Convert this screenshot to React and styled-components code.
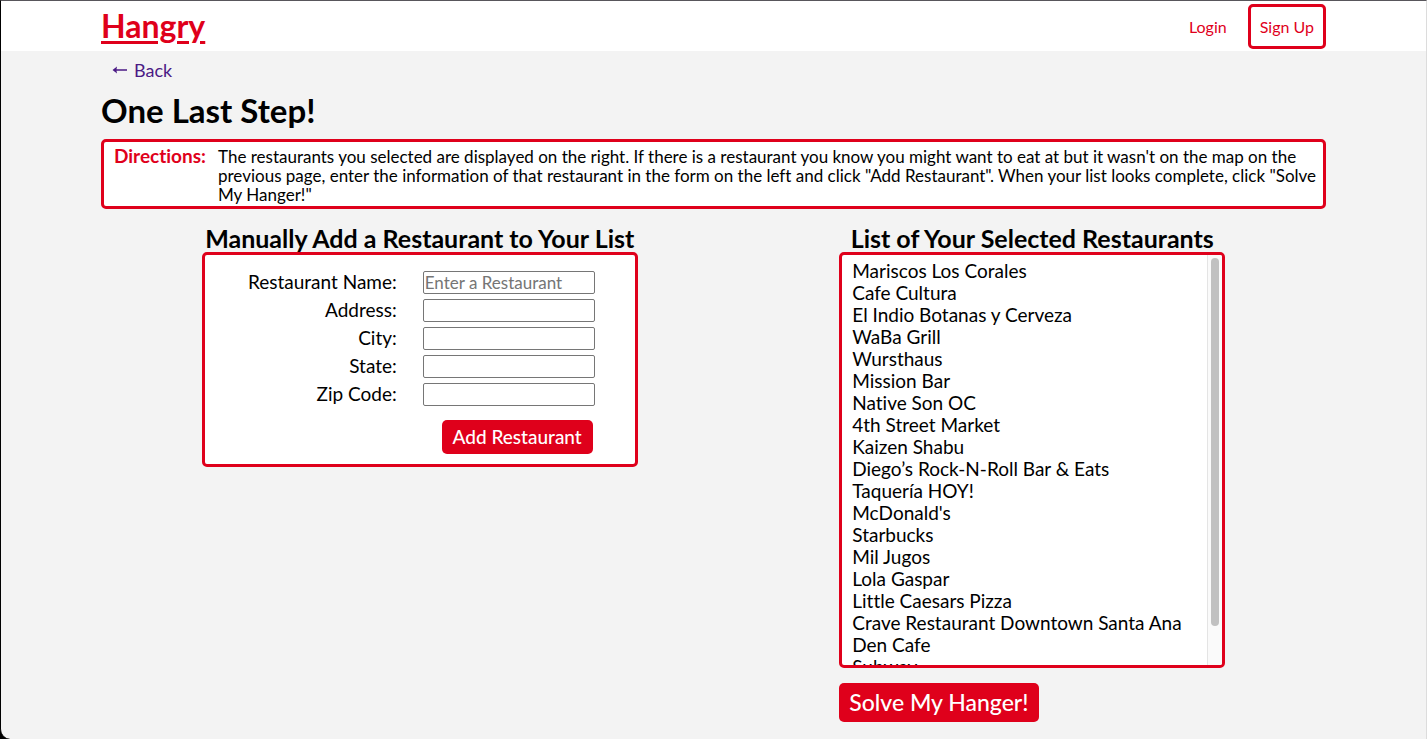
import React from "react";
import styled, { createGlobalStyle } from "styled-components";

const red = "#df001b";

const GlobalStyle = createGlobalStyle`
  * { box-sizing: border-box; }
  html, body { margin: 0; background: #000; }
  body, button, input { font-family: Lato, "Liberation Sans", sans-serif; }
  body {
    font-size: 19px;
    line-height: 22px;
    font-variant-ligatures: none;
    color: #000;
  }
  h1, h2, h3, p, ul { margin: 0; padding: 0; }
`;

const Page = styled.div`
  min-height: 100vh;
  background: #f3f3f3;
  border-top: 1px solid #58565b;
  border-left: 1px solid #000;
  border-right: 1px solid #dcdcdc;
  border-bottom-left-radius: 10px;
`;

const Header = styled.header`
  display: flex;
  align-items: center;
  justify-content: space-between;
  height: 50px;
  padding: 0 100px;
  background: #fff;
`;

const Logo = styled.a`
  font-size: 32px;
  line-height: 38px;
  font-weight: 700;
  color: ${red};
  text-decoration: underline;
  text-decoration-thickness: 3px;
  text-underline-offset: 3px;
`;

const Nav = styled.nav`
  display: flex;
  align-items: center;
  gap: 12px;
`;

const NavLink = styled.a`
  padding: 10px 9px;
  border: ${(p) => (p.$boxed ? `3px solid ${red}` : "0")};
  border-radius: 5px;
  font-size: 16px;
  line-height: 19px;
  color: ${red};
  text-decoration: none;
`;

const Main = styled.main`
  padding: 8px 100px 17px;
`;

const BackLink = styled.a`
  display: inline-flex;
  align-items: center;
  gap: 6px;
  padding: 0 11px;
  font-size: 18px;
  vertical-align: top;
  color: #4b1a85;
  text-decoration: none;
`;

const Title = styled.h1`
  margin: 10px 0 10px;
  font-size: 33px;
  line-height: 38px;
`;

const Panel = styled.div`
  background: #fff;
  border: 3px solid ${red};
  border-radius: 5px;
`;

const Directions = styled(Panel)`
  display: flex;
  gap: 12px;
  padding: 3px 5px 2px 10px;
`;

const DirectionsTitle = styled.h3`
  font-size: 19px;
  line-height: 22px;
  color: ${red};
`;

const DirectionsText = styled.p`
  padding-top: 2px;
  font-size: 17px;
  line-height: 19px;
`;

const Columns = styled.div`
  display: flex;
  flex-wrap: wrap;
  justify-content: space-around;
  align-items: flex-start;
  padding-top: 16px;
`;

const Column = styled.section`
  width: ${(p) => p.$width}px;
`;

const ColumnTitle = styled.h2`
  font-size: 25px;
  line-height: 27px;
  text-align: center;
  white-space: nowrap;
`;

const FormPanel = styled(Panel)`
  padding: 13px 40px 10px 20px;
`;

const Field = styled.div`
  display: grid;
  grid-template-columns: 1fr 172px;
  column-gap: 26px;
  align-items: center;
  height: 28px;
`;

const Label = styled.label`
  text-align: right;
`;

const TextInput = styled.input`
  width: 100%;
  height: 23px;
  padding: 1px;
  border: 1px solid #767676;
  border-radius: 2px;
  background: #fff;
  font-size: 17px;
  &::placeholder { color: #757575; }
`;

const Button = styled.button`
  display: block;
  padding: 6px ${(p) => (p.$large ? 10 : 11)}px;
  border: 0;
  border-radius: 5px;
  background: ${red};
  color: #fff;
  font-weight: 500;
  font-size: ${(p) => (p.$large ? 23 : 19)}px;
  line-height: ${(p) => (p.$large ? 27 : 22)}px;
  white-space: nowrap;
`;

const FormActions = styled.div`
  display: flex;
  justify-content: flex-end;
  padding: 12px 2px 0 0;
`;

const SelectedPanel = styled(Panel)`
  display: flex;
  height: 416px;
  overflow: hidden;
`;

const SelectedList = styled.ul`
  flex: 1;
  padding: 5px 10px 27px;
  list-style: none;
  white-space: nowrap;
  overflow-y: auto;
  scrollbar-width: none;
`;

const Track = styled.div`
  width: 15px;
  padding: 3px;
  border-left: 1px solid #e4e4e4;
  background: #fafafa;
`;

const Thumb = styled.div`
  width: 8px;
  height: 91%;
  border-radius: 4px;
  background: #c1c1c1;
`;

const SolveRow = styled.div`
  padding-top: 15px;
`;

const Arrow = () => (
  <svg width="16" height="10" viewBox="0 0 16 10" aria-hidden="true">
    <path d="M0.5 5 L5 1.6 L4.5 4.3 H15 V5.7 H4.5 L5 8.4 Z" fill="currentColor" />
  </svg>
);

const fields = [
  { id: "name", label: "Restaurant Name:", placeholder: "Enter a Restaurant" },
  { id: "address", label: "Address:" },
  { id: "city", label: "City:" },
  { id: "state", label: "State:" },
  { id: "zip", label: "Zip Code:" },
];

const restaurants = [
  "Mariscos Los Corales",
  "Cafe Cultura",
  "El Indio Botanas y Cerveza",
  "WaBa Grill",
  "Wursthaus",
  "Mission Bar",
  "Native Son OC",
  "4th Street Market",
  "Kaizen Shabu",
  "Diego’s Rock-N-Roll Bar & Eats",
  "Taquería HOY!",
  "McDonald's",
  "Starbucks",
  "Mil Jugos",
  "Lola Gaspar",
  "Little Caesars Pizza",
  "Crave Restaurant Downtown Santa Ana",
  "Den Cafe",
  "Subway",
];

export default function App() {
  return (
    <>
      <GlobalStyle />
      <Page>
        <Header>
          <Logo href="#">Hangry</Logo>
          <Nav>
            <NavLink href="#">Login</NavLink>
            <NavLink href="#" $boxed>Sign Up</NavLink>
          </Nav>
        </Header>
        <Main>
          <BackLink href="#"><Arrow />Back</BackLink>
          <Title>One Last Step!</Title>
          <Directions>
            <DirectionsTitle>Directions:</DirectionsTitle>
            <DirectionsText>
              The restaurants you selected are displayed on the right. If there is a restaurant you know you might want to eat at but it wasn't on the map on the previous page, enter the information of that restaurant in the form on the left and click "Add Restaurant". When your list looks complete, click "Solve My Hanger!"
            </DirectionsText>
          </Directions>
          <Columns>
            <Column $width={436}>
              <ColumnTitle>Manually Add a Restaurant to Your List</ColumnTitle>
              <FormPanel as="form" onSubmit={(e) => e.preventDefault()}>
                {fields.map((f) => (
                  <Field key={f.id}>
                    <Label htmlFor={f.id}>{f.label}</Label>
                    <TextInput id={f.id} type="text" placeholder={f.placeholder} />
                  </Field>
                ))}
                <FormActions>
                  <Button type="submit">Add Restaurant</Button>
                </FormActions>
              </FormPanel>
            </Column>
            <Column $width={386}>
              <ColumnTitle>List of Your Selected Restaurants</ColumnTitle>
              <SelectedPanel>
                <SelectedList>
                  {restaurants.map((r) => <li key={r}>{r}</li>)}
                </SelectedList>
                <Track aria-hidden="true"><Thumb /></Track>
              </SelectedPanel>
              <SolveRow>
                <Button type="button" $large>Solve My Hanger!</Button>
              </SolveRow>
            </Column>
          </Columns>
        </Main>
      </Page>
    </>
  );
}
